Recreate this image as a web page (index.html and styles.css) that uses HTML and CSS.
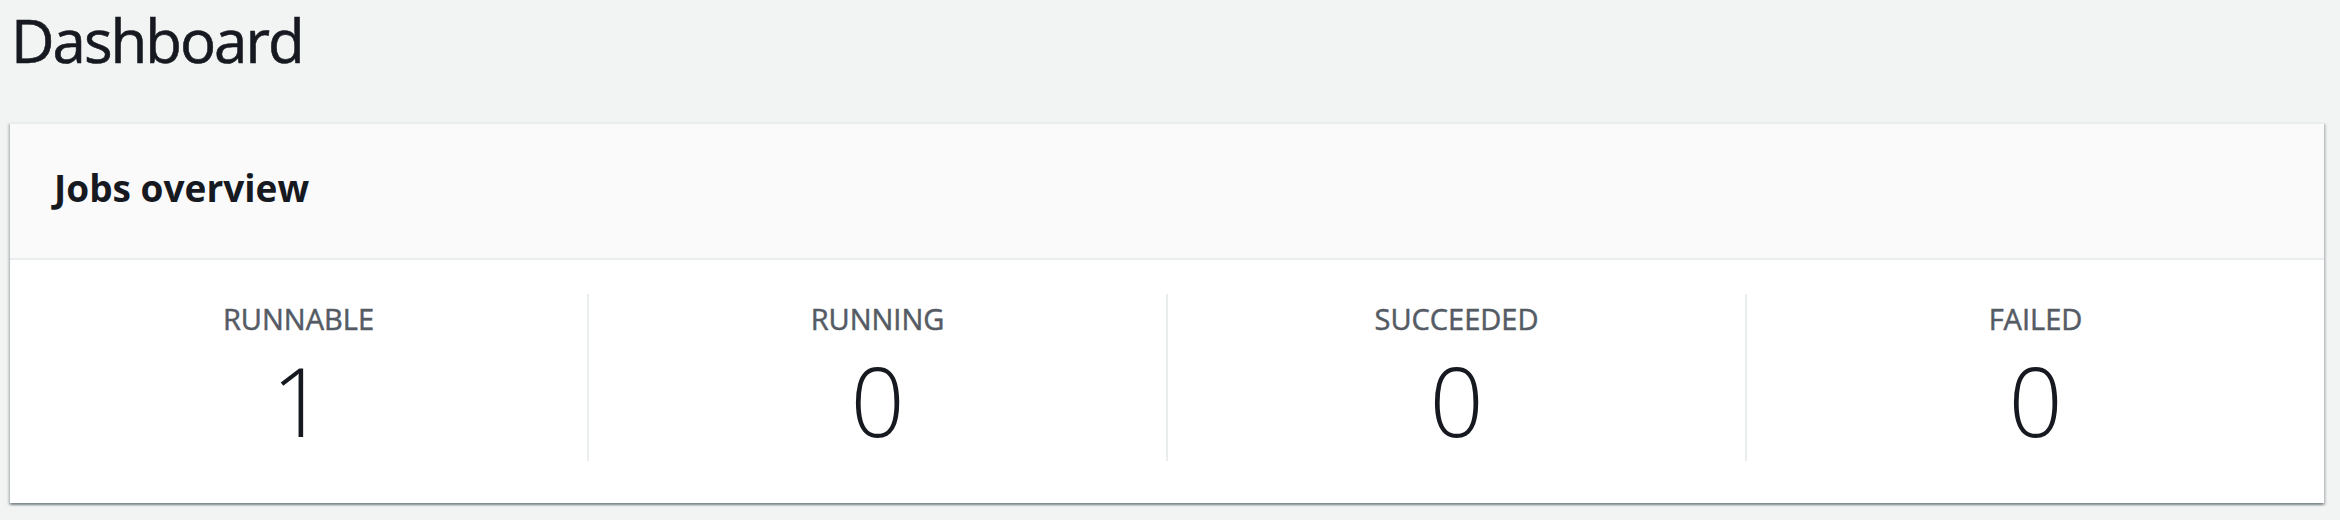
FILE: index.html
```html
<!DOCTYPE html>
<html lang="en">
<head>
<meta charset="utf-8">
<title>Dashboard</title>
<link rel="stylesheet" href="styles.css">
</head>
<body>
<main class="page">
  <h1 class="page-title">Dashboard</h1>
  <section class="card">
    <header class="card-header">
      <h2 class="card-title">Jobs overview</h2>
    </header>
    <div class="card-body">
      <div class="stat">
        <div class="stat-label">RUNNABLE</div>
        <div class="stat-value">1</div>
      </div>
      <div class="stat">
        <div class="stat-label">RUNNING</div>
        <div class="stat-value">0</div>
      </div>
      <div class="stat">
        <div class="stat-label">SUCCEEDED</div>
        <div class="stat-value">0</div>
      </div>
      <div class="stat">
        <div class="stat-label">FAILED</div>
        <div class="stat-value">0</div>
      </div>
    </div>
  </section>
</main>
</body>
</html>
```

FILE: styles.css
```css
html, body {
  margin: 0;
  padding: 0;
  background: #f2f3f3;
}
body {
  font-family: "Open Sans", "Noto Sans", Arial, sans-serif;
  color: #16191f;
  width: 2340px;
  height: 520px;
  overflow: hidden;
}
.page {
  padding: 0 16px 0 10px;
}
.page-title {
  margin: 0;
  height: 122px;
  font-size: 60px;
  font-weight: 400;
  line-height: 80px;
  letter-spacing: -2px;
  padding-left: 1px;
  -webkit-text-stroke: 0.6px #16191f;
}
.card {
  background: #ffffff;
  border-top: 2px solid #eaeded;
  box-shadow: 0 2px 2px 0 rgba(0, 28, 36, 0.3), 2px 2px 2px 0 rgba(0, 28, 36, 0.15), -2px 2px 2px 0 rgba(0, 28, 36, 0.15);
}
.card-header {
  height: 136px;
  box-sizing: border-box;
  background: #fafafa;
  border-bottom: 2px solid #eaeded;
  display: flex;
  align-items: center;
  padding: 0 0 6px 44px;
}
.card-title {
  margin: 0;
  font-size: 37px;
  font-weight: 700;
  line-height: 40px;
}
.card-body {
  display: flex;
  padding: 34px 0 42px;
}
.stat {
  flex: 1 1 0;
  height: 167px;
  display: flex;
  flex-direction: column;
  align-items: center;
  border-left: 2px solid #eaeded;
}
.stat:first-child {
  border-left: none;
}
.stat-label {
  margin-top: 10px;
  font-size: 29px;
  font-weight: 400;
  line-height: 30px;
  color: #545b64;
  -webkit-text-stroke: 0.5px #545b64;
}
.stat-value {
  margin-top: 16px;
  font-size: 95px;
  font-weight: 300;
  line-height: 100px;
}
```
